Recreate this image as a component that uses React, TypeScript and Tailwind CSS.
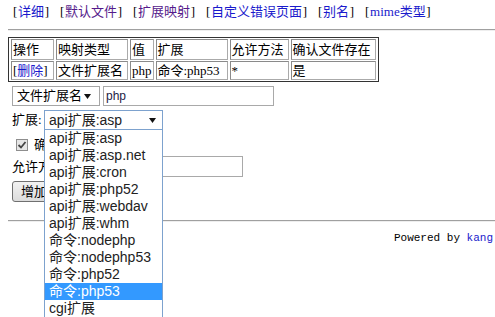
import React from "react";

const serif = "font-['Liberation_Serif','Noto_Sans_CJK_SC',serif]";
const sans = "font-['Liberation_Sans','Noto_Sans_CJK_SC',sans-serif]";

const navLinks = [
  { label: "详细", visited: false },
  { label: "默认文件", visited: true },
  { label: "扩展映射", visited: true },
  { label: "自定义错误页面", visited: false },
  { label: "别名", visited: false },
  { label: "mime类型", visited: false },
];

const options = [
  "api扩展:asp",
  "api扩展:asp.net",
  "api扩展:cron",
  "api扩展:php52",
  "api扩展:webdav",
  "api扩展:whm",
  "命令:nodephp",
  "命令:nodephp53",
  "命令:php52",
  "命令:php53",
  "cgi扩展",
];

const Arrow = () => (
  <svg width="7" height="5" viewBox="0 0 7 5" className="shrink-0">
    <path d="M0 0 L7 0 L3.5 5 Z" fill="#111" />
  </svg>
);

const Cell = ({ w, children }: { w: string; children?: React.ReactNode }) => (
  <td
    className={`${w} border border-[#8a8a8a] border-r-[#aaa] border-b-[#aaa] px-[1px] py-0 align-middle whitespace-nowrap leading-[17px]`}
  >
    {children}
  </td>
);

export default function App() {
  return (
    <div className={`relative w-[495px] h-[317px] overflow-hidden bg-white text-black text-[13px] ${serif}`}>
      {/* top nav */}
      <div className="mt-[4px] ml-[13px] h-[16px] flex items-center gap-[11px] leading-[16px] whitespace-nowrap">
        {navLinks.map((l) => (
          <span key={l.label} className="flex items-center">
            <span className="w-[5px]">[</span>
            <a className={l.visited ? "text-[#551a8b]" : "text-[#1a1acc]"}>{l.label}</a>
            <span className="w-[5px] text-right">]</span>
          </span>
        ))}
      </div>

      <div className="mt-[9px] ml-[8px] h-[2px] border-t border-[#a0a0a0] border-b border-b-[#eeeeee]" />

      {/* mapping table */}
      <div className="mt-[6px] ml-[8px] w-fit border border-[#333]">
        <table className="border-separate border-spacing-x-[2px] border-spacing-y-[1px]">
          <tbody>
            <tr className="h-[21px]">
              <Cell w="w-[43px]">操作</Cell>
              <Cell w="w-[72px]">映射类型</Cell>
              <Cell w="w-[22px]">值</Cell>
              <Cell w="w-[72px]">扩展</Cell>
              <Cell w="w-[59px]">允许方法</Cell>
              <Cell w="w-[85px]">确认文件存在</Cell>
            </tr>
            <tr className="h-[19px]">
              <Cell w="w-[43px]">
                [<a className="text-[#1a1acc]">删除</a>]
              </Cell>
              <Cell w="w-[72px]">文件扩展名</Cell>
              <Cell w="w-[22px]">php</Cell>
              <Cell w="w-[72px]">命令:php53</Cell>
              <Cell w="w-[59px]">*</Cell>
              <Cell w="w-[85px]">是</Cell>
            </tr>
          </tbody>
        </table>
      </div>

      {/* type + value */}
      <div className="mt-[4px] ml-[12px] flex items-center gap-[3px] h-[20px]">
        <div className="w-[88px] h-[20px] border border-[#a6a6a6] bg-white flex items-center pl-[4px] pr-[8px] justify-between">
          <span className="leading-[16px]">文件扩展名</span>
          <Arrow />
        </div>
        <div className={`w-[171px] h-[20px] border border-[#a9a9a9] flex items-center pl-[2px] text-[12px] text-[#1c1c44] ${sans}`}>
          php
        </div>
      </div>

      {/* extension select */}
      <div className="mt-[4px] ml-[12px] flex items-center h-[20px]">
        <span className="w-[32px]">扩展:</span>
        <div className={`w-[119px] h-[20px] border border-[#7da2ce] flex items-center justify-between pl-[4px] pr-[6px] text-[14px] text-[#222] ${sans}`}>
          <span className="leading-[16px]">api扩展:asp</span>
          <Arrow />
        </div>
      </div>

      {/* checkbox */}
      <div className="mt-[5px] ml-[16px] flex items-center h-[20px] gap-[6px]">
        <svg width="12" height="12" viewBox="0 0 12 12">
          <rect x="0.5" y="0.5" width="11" height="11" fill="#e6e6e6" stroke="#8e8e8e" />
          <path d="M2.5 6 L5 8.5 L9.5 3" fill="none" stroke="#444" strokeWidth="1.8" />
        </svg>
        <span>确认文件存在</span>
      </div>

      {/* methods */}
      <div className="mt-[1px] ml-[12px] flex items-center h-[21px]">
        <span className="w-[60px]">允许方法:</span>
        <div className="w-[171px] h-[21px] border border-[#a9a9a9]" />
      </div>

      {/* submit */}
      <div className="mt-[4px] ml-[12px]">
        <button className="h-[21px] px-[8px] border border-[#707070] rounded-[3px] bg-gradient-to-b from-[#f2f2f2] to-[#dcdcdc] leading-[17px]">
          增加映射
        </button>
      </div>

      <div className="mt-[18px] ml-[8px] h-[2px] border-t border-[#a0a0a0] border-b border-b-[#eeeeee]" />

      <div className="mt-[9px] pr-[2px] text-right text-[11px] leading-[14px] font-['Liberation_Mono',monospace]">
        Powered by <a className="text-[#1a1acc]">kang</a>
      </div>

      {/* open dropdown list */}
      <div className={`absolute left-[44px] top-[130px] w-[119px] border border-[#7da2ce] border-t-0 bg-white text-[14px] text-[#222] ${sans}`}>
        {options.map((o) => (
          <div
            key={o}
            className={`h-[17px] leading-[17px] pl-[4px] whitespace-nowrap ${o === "命令:php53" ? "bg-[#3399ff] text-white" : ""}`}
          >
            {o}
          </div>
        ))}
      </div>
    </div>
  );
}
